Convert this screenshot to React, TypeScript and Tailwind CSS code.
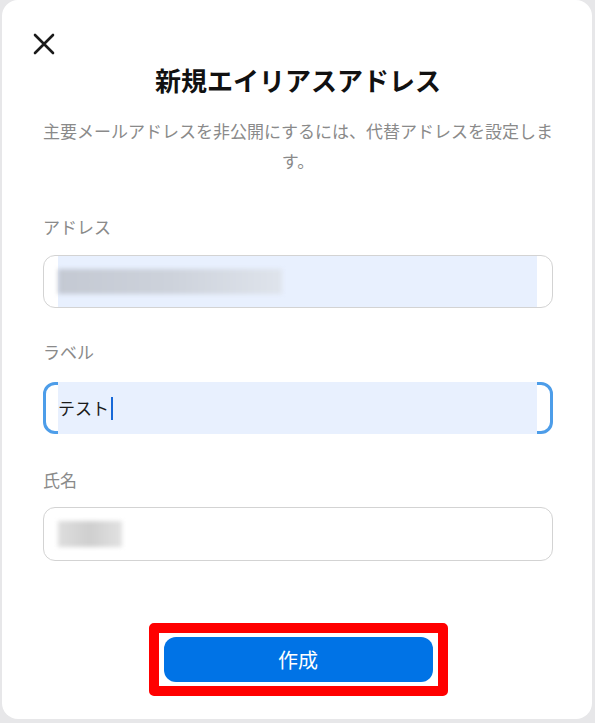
export default function App() {
  return (
    <div className="h-[723px] w-[595px] overflow-hidden bg-[#e7e7e9] font-['Noto_Sans_CJK_JP','Noto_Sans',sans-serif]">
      <div className="ml-[2px] flex h-[719px] w-[590px] flex-col rounded-[16px] bg-white pt-[33px] pr-[39px] pl-[41px]">
        {/* Close */}
        <button className="-ml-[10px] h-[22px] w-[22px]" aria-label="閉じる">
          <svg width="22" height="22" viewBox="0 0 22 22" fill="none" stroke="#1a1a1a" strokeWidth={2.6} strokeLinecap="round">
            <path d="M2 2L20 20M20 2L2 20" />
          </svg>
        </button>

        <h1 className="mt-[7px] text-center text-[26px] leading-[36px] font-bold text-[#111]">新規エイリアスアドレス</h1>
        <p className="-mx-[1px] mt-[18px] text-center text-[17px] leading-[30px] text-[#8a8a8a]">
          主要メールアドレスを非公開にするには、代替アドレスを設定します。
        </p>

        {/* Address */}
        <label className="mt-[39px] text-[17px] leading-[24px] text-[#8a8a8a]">アドレス</label>
        <div className="mt-[16px] flex h-[53px] rounded-[12px] border border-[#d3d3d3]">
          <div className="ml-[14px] mr-[15px] flex flex-1 items-center bg-[#e8f0fe]">
            <div className="h-[25px] w-[224px] bg-linear-to-r from-[#c4c9d3] via-[#cdd2db] to-[#dfe4ec] blur-[2px]" />
          </div>
        </div>

        {/* Label */}
        <label className="mt-[32px] text-[17px] leading-[24px] text-[#8a8a8a]">ラベル</label>
        <div className="mt-[18px] flex h-[52px] rounded-[12px] border-[3px] border-[#4d9de9]">
          <div className="-my-[3px] ml-[12px] mr-[13px] flex flex-1 items-center bg-[#e8f0fe]">
            <span className="text-[17px] text-[#1a1a1a]">テスト</span>
            <span className="ml-[2px] h-[23px] w-[2px] bg-[#1668d8]" />
          </div>
        </div>

        {/* Name */}
        <label className="mt-[34px] text-[17px] leading-[24px] text-[#8a8a8a]">氏名</label>
        <div className="mt-[15px] flex h-[54px] items-center rounded-[12px] border border-[#d3d3d3] pl-[14px]">
          <div className="h-[26px] w-[64px] bg-linear-to-r from-[#dedede] via-[#cfcfcf] to-[#e2e2e2] blur-[2px]" />
        </div>

        {/* Create */}
        <div className="mt-[62px] flex justify-center">
          <div className="rounded-[5px] border-[10px] border-[#ff0000] bg-white px-[5px] py-[4px]">
            <button className="flex h-[45px] w-[269px] items-center justify-center rounded-[12px] bg-[#0073e6] text-[20px] font-normal text-white">
              作成
            </button>
          </div>
        </div>
      </div>
    </div>
  )
}
